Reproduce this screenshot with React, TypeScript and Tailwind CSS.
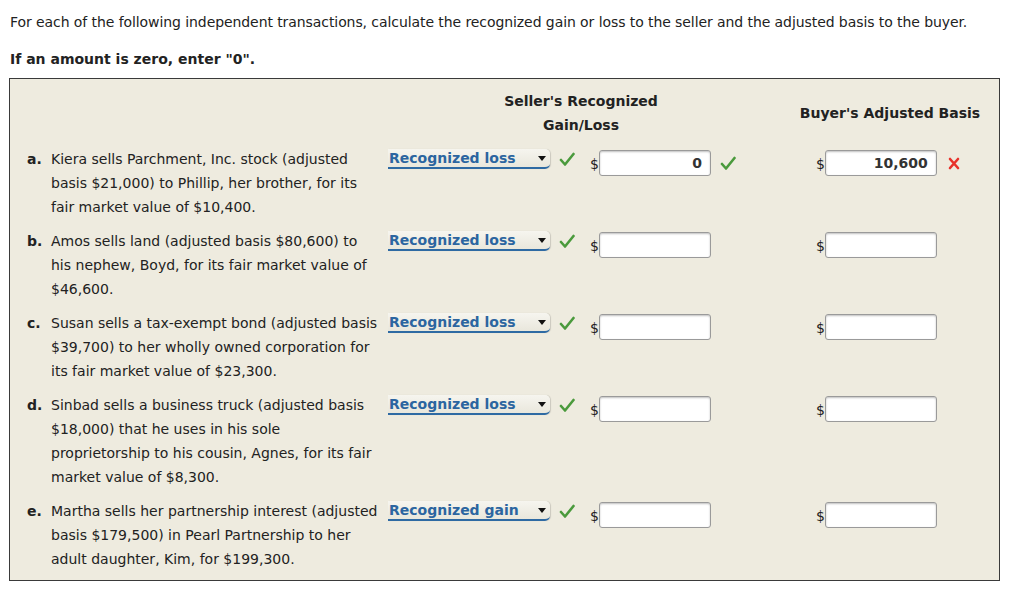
import React from "react";

type Row = {
  key: string;
  lines: string[];
  choice: string;
  seller?: string;
  buyer?: string;
  buyerWrong?: boolean;
};

const rows: Row[] = [
  {
    key: "a.",
    lines: [
      "Kiera sells Parchment, Inc. stock (adjusted",
      "basis $21,000) to Phillip, her brother, for its",
      "fair market value of $10,400.",
    ],
    choice: "Recognized loss",
    seller: "0",
    buyer: "10,600",
    buyerWrong: true,
  },
  {
    key: "b.",
    lines: [
      "Amos sells land (adjusted basis $80,600) to",
      "his nephew, Boyd, for its fair market value of",
      "$46,600.",
    ],
    choice: "Recognized loss",
  },
  {
    key: "c.",
    lines: [
      "Susan sells a tax-exempt bond (adjusted basis",
      "$39,700) to her wholly owned corporation for",
      "its fair market value of $23,300.",
    ],
    choice: "Recognized loss",
  },
  {
    key: "d.",
    lines: [
      "Sinbad sells a business truck (adjusted basis",
      "$18,000) that he uses in his sole",
      "proprietorship to his cousin, Agnes, for its fair",
      "market value of $8,300.",
    ],
    choice: "Recognized loss",
  },
  {
    key: "e.",
    lines: [
      "Martha sells her partnership interest (adjusted",
      "basis $179,500) in Pearl Partnership to her",
      "adult daughter, Kim, for $199,300.",
    ],
    choice: "Recognized gain",
  },
];

function Check() {
  return (
    <svg width="16" height="15" viewBox="0 0 16 15" className="shrink-0">
      <path d="M2 8 L6 12.5 L14.5 2" fill="none" stroke="#4a9a3c" strokeWidth="2.6" strokeLinecap="round" strokeLinejoin="round" />
    </svg>
  );
}

function Cross() {
  return (
    <svg width="12" height="13" viewBox="0 0 12 13" className="shrink-0">
      <path d="M2 2 L10 11 M10 2 L2 11" fill="none" stroke="#e8322b" strokeWidth="2.6" strokeLinecap="round" />
    </svg>
  );
}

function Money({ value }: { value?: string }) {
  return (
    <div className="flex items-end">
      <span className="text-[14px] leading-[18px] mb-[3px]">$</span>
      <div className="w-[112px] h-[26px] bg-white border border-[#9a9a9a] rounded-[3px] shadow-[inset_0_1px_2px_rgba(0,0,0,0.25)] flex items-center justify-end pr-[8px] font-bold text-[14px] text-[#333]">
        {value}
      </div>
    </div>
  );
}

function Select({ label }: { label: string }) {
  return (
    <div className="w-[162px] h-[20px] relative flex items-center border-b-2 border-[#2e6aa3] rounded-tr-[5px] rounded-br-[5px] bg-gradient-to-b from-[#f6f5ef] to-[#e9e7dc] shadow-[1px_0_1px_rgba(0,0,0,0.15)]">
      <span className="font-bold text-[#2b65a0] text-[14px] leading-[18px] pl-[1px]">{label}</span>
      <svg width="8" height="5" viewBox="0 0 8 5" className="absolute right-[4px] top-[7px]">
        <path d="M0 0 H8 L4 5 Z" fill="#111" />
      </svg>
    </div>
  );
}

export default function App() {
  return (
    <div className="w-[1024px] h-[600px] bg-white text-[#222] font-['DejaVu_Sans',Verdana,sans-serif] text-[14px]">
      <div className="pt-[12px] px-[10px]">
        <p className="leading-[20px] tracking-[-0.08px]">
          For each of the following independent transactions, calculate the recognized gain or loss to the seller and the adjusted basis to the buyer.
        </p>
        <p className="mt-[17px] leading-[20px] font-bold">If an amount is zero, enter "0".</p>
      </div>

      <div className="ml-[9px] mt-[9px] w-[991px] h-[503px] border border-[#3a3a3a] bg-[#eeebdf]">
        <div className="flex pt-[10px]">
          <div className="w-[378px]" />
          <div className="w-[386px] text-center font-bold leading-[24px]">
            <div>Seller's Recognized</div>
            <div>Gain/Loss</div>
          </div>
          <div className="w-[220px] pl-[12px] flex items-center justify-center font-bold whitespace-nowrap">Buyer's Adjusted Basis</div>
        </div>

        <div className="mt-[10px] flex flex-col gap-[10px]">
          {rows.map((r) => (
            <div key={r.key} className="flex items-start">
              <div className="w-[41px] pl-[17px] font-bold leading-[24px]">{r.key}</div>
              <div className="w-[337px] leading-[24px]">
                {r.lines.map((l) => (
                  <div key={l}>{l}</div>
                ))}
              </div>
              <div className="flex items-center pt-[2px]">
                <Select label={r.choice} />
                <div className="ml-[9px]">
                  <Check />
                </div>
              </div>
              <div className="ml-[15px] mt-[3px] flex items-center">
                <Money value={r.seller} />
                <div className="ml-[9px] w-[16px]">{r.seller ? <Check /> : null}</div>
              </div>
              <div className="ml-[80px] mt-[3px] flex items-center">
                <Money value={r.buyer} />
                <div className="ml-[11px]">{r.buyerWrong ? <Cross /> : null}</div>
              </div>
            </div>
          ))}
        </div>
      </div>
    </div>
  );
}
